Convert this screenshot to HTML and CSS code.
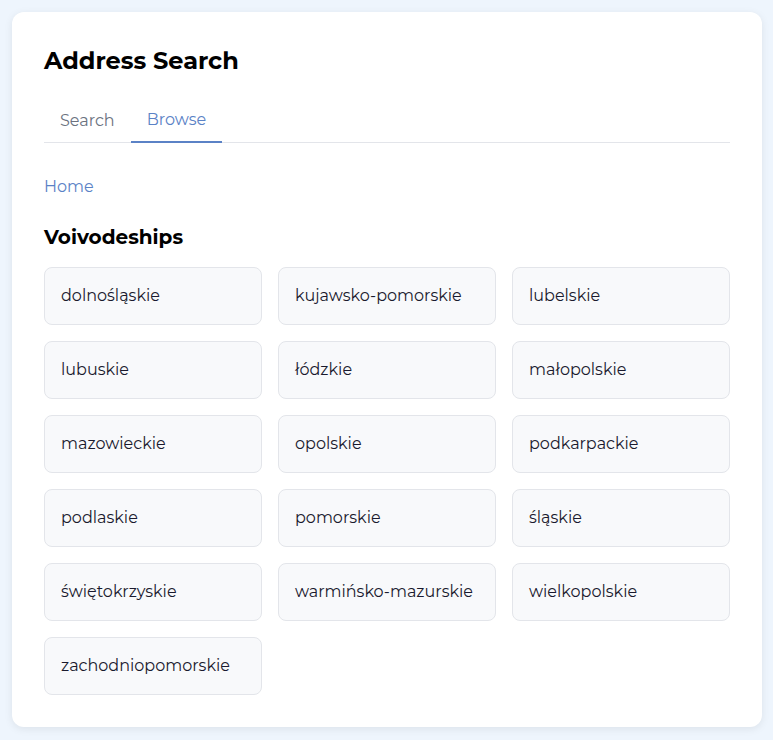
FILE: index.html
```html
<!DOCTYPE html>
<html lang="pl">
<head>
<meta charset="utf-8">
<title>Address Search</title>
<link rel="stylesheet" href="styles.css">
</head>
<body>
<main class="card">
  <h1 class="title">Address Search</h1>
  <nav class="tabs">
    <button class="tab">Search</button>
    <button class="tab active">Browse</button>
  </nav>
  <div class="breadcrumb"><a class="crumb" href="#">Home</a></div>
  <h2 class="section-title">Voivodeships</h2>
  <div class="grid">
    <button class="item">dolnośląskie</button>
    <button class="item">kujawsko-pomorskie</button>
    <button class="item">lubelskie</button>
    <button class="item">lubuskie</button>
    <button class="item">łódzkie</button>
    <button class="item">małopolskie</button>
    <button class="item">mazowieckie</button>
    <button class="item">opolskie</button>
    <button class="item">podkarpackie</button>
    <button class="item">podlaskie</button>
    <button class="item">pomorskie</button>
    <button class="item">śląskie</button>
    <button class="item">świętokrzyskie</button>
    <button class="item">warmińsko-mazurskie</button>
    <button class="item">wielkopolskie</button>
    <button class="item">zachodniopomorskie</button>
  </div>
</main>
</body>
</html>
```
FILE: styles.css
```css
* { box-sizing: border-box; }
html, body { margin: 0; }
body {
  background: #eef5fd;
  font-family: Montserrat, Inter, "Open Sans", sans-serif;
  color: #1a1a2e;
  padding: 12px 11px 13px 12px;
}
.card {
  background: #fff;
  border-radius: 12px;
  box-shadow: 0 2px 8px rgba(0,0,0,0.08);
  padding: 34px 32px 32px;
}
.title {
  margin: 0;
  font-size: 24px;
  line-height: 30px;
  font-weight: 700;
  color: #000;
}
.tabs {
  display: flex;
  margin-top: 24px;
  border-bottom: 1px solid #e3e5ea;
}
.tab {
  font: inherit;
  font-size: 16px;
  line-height: 20px;
  background: none;
  border: 0;
  border-bottom: 2px solid transparent;
  margin-bottom: -1px;
  padding: 11px 16px 10px;
  color: #6b7280;
  cursor: pointer;
}
.tab.active {
  padding: 10px 16px 11px;
  color: #5b82c6;
  border-bottom-color: #5b82c6;
}
.breadcrumb {
  margin-top: 33px;
  font-size: 16px;
  line-height: 22px;
}
.crumb { color: #5b82c6; text-decoration: none; }
.section-title {
  margin: 27px 0 0;
  font-size: 20px;
  line-height: 24px;
  font-weight: 700;
  color: #000;
}
.grid {
  margin-top: 18px;
  display: grid;
  grid-template-columns: repeat(3, 1fr);
  gap: 16px;
}
.item {
  font: inherit;
  font-size: 16px;
  text-align: left;
  height: 58px;
  padding: 0 16px 1px;
  background: #f8f9fb;
  border: 1px solid #e3e5ea;
  border-radius: 8px;
  color: #1a1a2e;
  cursor: pointer;
}
```
